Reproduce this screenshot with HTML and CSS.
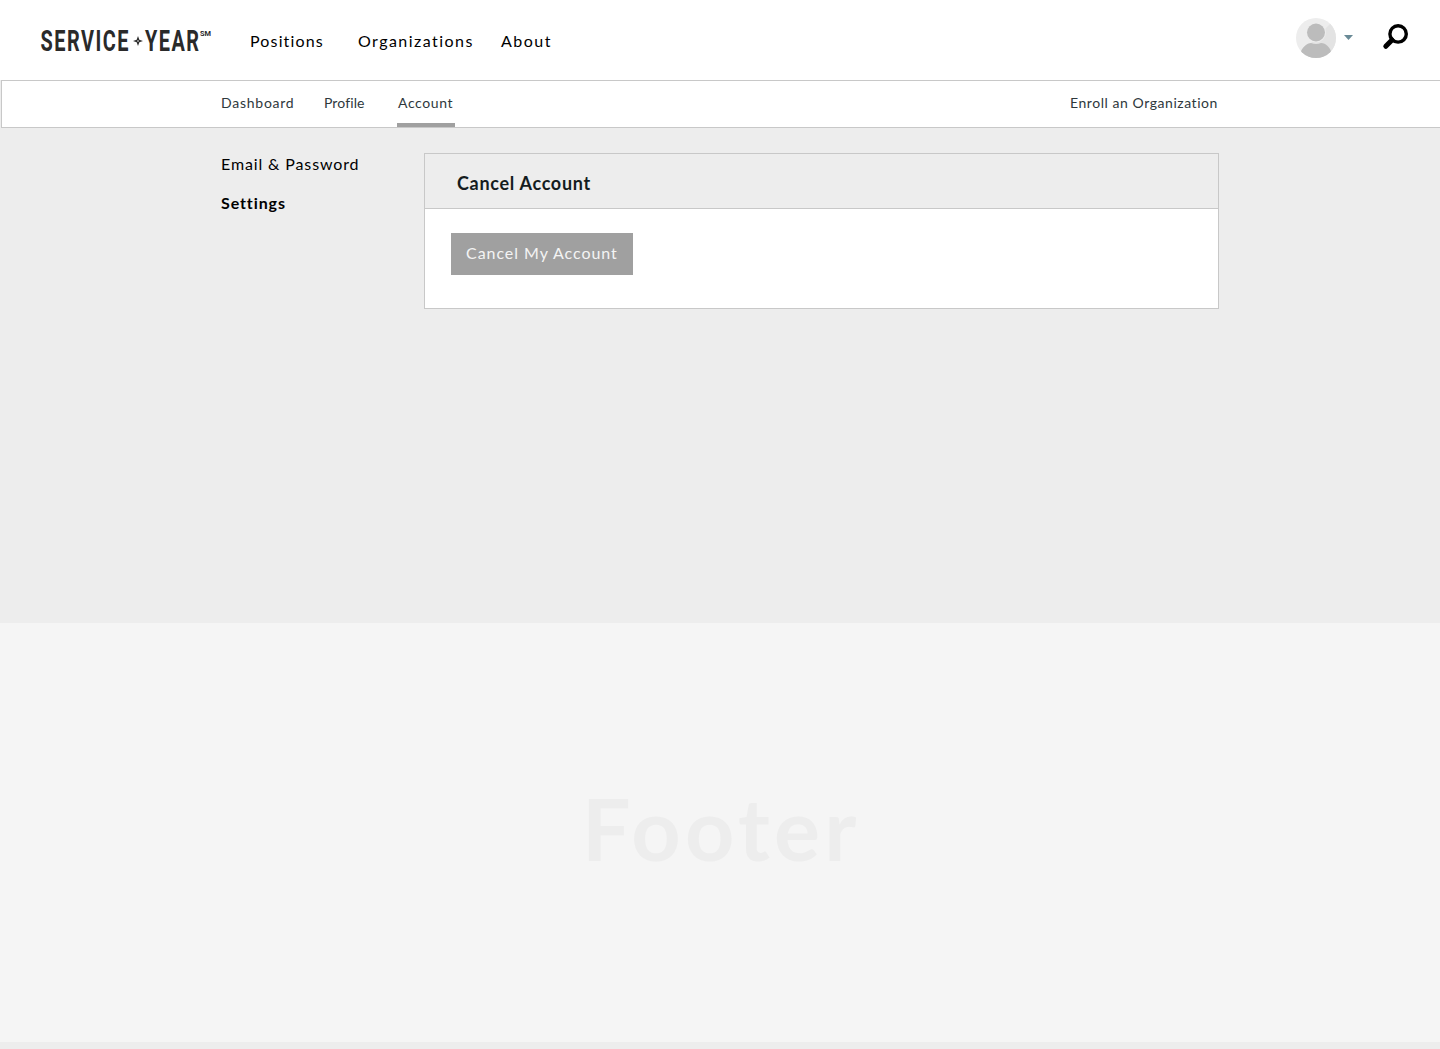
FILE: index.html
```html
<!DOCTYPE html>
<html lang="en">
<head>
<meta charset="utf-8">
<title>Service Year – Account Settings</title>
<link rel="stylesheet" href="styles.css">
</head>
<body>
<header class="topbar">
  <a class="logo" aria-label="Service Year">
    <svg width="174" height="44" viewBox="0 0 174 44">
      <g class="logo-text">
        <text x="-.5" y="33" textLength="89.500" lengthAdjust="spacingAndGlyphs">SERVICE</text>
        <text x="104" y="33" textLength="55.500" lengthAdjust="spacingAndGlyphs">YEAR</text>
      </g>
      <text class="logo-mark" x="159" y="18" textLength="11" lengthAdjust="spacingAndGlyphs">SM</text>
      <path d="M97 18L98.300 21.700L102 23L98.300 24.300L97 28L95.700 24.300L92 23L95.700 21.700Z" fill="#2a2a2a"/>
      <circle cx="97" cy="23" r=".8" fill="#fff"/>
    </svg>
  </a>
  <nav class="main-nav">
    <a class="positions">Positions</a>
    <a class="organizations">Organizations</a>
    <a class="about">About</a>
  </nav>
  <div class="tools">
    <svg class="avatar" width="40" height="40" viewBox="0 0 40 40">
      <defs><clipPath id="disc"><circle cx="20" cy="20" r="20"/></clipPath></defs>
      <g clip-path="url(#disc)">
        <path d="M0 0H40V40H0Z" fill="#ededed"/>
        <path d="M40 0V40H0Z" fill="#e3e3e3"/>
        <circle cx="20" cy="14.500" r="10" fill="#ededed"/>
        <circle cx="20" cy="14.500" r="9" fill="#bcbcbc"/>
        <path d="M4 36C6 29 11 25 15 25C18 26.300 22 26.300 25 25C30 25 34 29 36 36V40H4Z" fill="#bcbcbc"/>
      </g>
    </svg>
    <svg class="caret" width="9" height="5" viewBox="0 0 9 5"><path d="M0 0H9L4.500 5Z" fill="#698a96"/></svg>
    <svg class="search" width="26" height="26" viewBox="0 0 26 26" fill="none" stroke="#000">
      <circle cx="15.100" cy="9.900" r="8.200" stroke-width="3.400"/>
      <path d="M9 16L2.800 22.300" stroke-width="5" stroke-linecap="round"/>
    </svg>
  </div>
</header>
<div class="subbar">
  <nav class="sub-nav">
    <a class="dashboard">Dashboard</a>
    <a class="profile">Profile</a>
    <a class="account">Account</a>
    <a class="enroll">Enroll an Organization</a>
  </nav>
</div>
<main class="content">
  <aside class="side-nav">
    <a class="email">Email &amp; Password</a>
    <a class="settings">Settings</a>
  </aside>
  <section class="card">
    <h1 class="card-title">Cancel Account</h1>
    <div class="card-body"><button class="button" type="button">Cancel My Account</button></div>
  </section>
</main>
<footer class="footer">Footer</footer>
</body>
</html>
```
FILE: styles.css
```css
* { box-sizing: border-box; }
body { margin: 0; background: #ededed; color: #000; font-family: Lato, "Liberation Sans", sans-serif; }
.topbar { display: flex; height: 80px; background: #fff; padding-left: 41px; }
.logo { display: block; width: 209px; padding-top: 18px; }
.logo svg, .tools svg { display: block; overflow: visible; }
.logo-text { font: 700 29.500px Roboto, sans-serif; letter-spacing: 2.200px; fill: #2a2a2a; }
.logo-mark { font: 700 7.500px Roboto, sans-serif; fill: #2a2a2a; }
.main-nav { display: flex; font-size: 16px; line-height: 20px; padding-top: 31px; }
.positions { width: 108px; letter-spacing: 1.150px; }
.organizations { width: 143px; letter-spacing: 1.450px; }
.about { letter-spacing: 1.500px; }
.tools { display: flex; margin-left: auto; padding-right: 31px; }
.tools .avatar { margin-top: 18px; }
.caret { margin: 35px 30px 0 8px; }
.search { margin-top: 24px; }
.subbar { height: 48px; margin-left: 1px; background: #fff; border: 1px solid #c8c8c8; border-right: 0; }
.sub-nav { display: flex; width: 998px; height: 46px; margin-left: 219px; font-size: 14px; line-height: 18px; color: #2e383c; }
.sub-nav a { padding-top: 13px; }
.dashboard { width: 103px; letter-spacing: .750px; }
.profile { width: 73px; letter-spacing: .1px; }
.sub-nav .account { width: 58px; padding-left: 1px; border-bottom: 4px solid #a0a0a0; letter-spacing: .6px; }
.enroll { margin: 0 1px 0 auto; letter-spacing: .560px; }
.content { display: flex; height: 495px; padding: 25px 221px 0; }
.side-nav { display: flex; flex-direction: column; width: 203px; font-size: 16px; line-height: 20px; gap: 19px; padding-top: 1px; letter-spacing: .870px; }
.settings { font-weight: 700; letter-spacing: .9px; }
.card { width: 795px; height: 156px; background: #fff; border: 1px solid #c8c8c8; }
.card-title { height: 55px; margin: 0; padding: 17px 32px; background: #ededed; border-bottom: 1px solid #c8c8c8; color: #141c20; font-size: 18px; line-height: 24px; font-weight: 700; letter-spacing: .7px; }
.card-body { padding: 24px 26px; }
.button { width: 182px; height: 42px; border: 0; padding: 0 0 2px 15px; background: #a0a0a0; color: #f4f4f4; font: 16px/20px Lato, sans-serif; text-align: left; letter-spacing: .950px; white-space: nowrap; }
.footer { height: 419px; background: #f5f5f5; color: #ededed; font-size: 86px; font-weight: 700; line-height: 104px; padding: 153px 0 0 582px; letter-spacing: 4.400px; }
```
